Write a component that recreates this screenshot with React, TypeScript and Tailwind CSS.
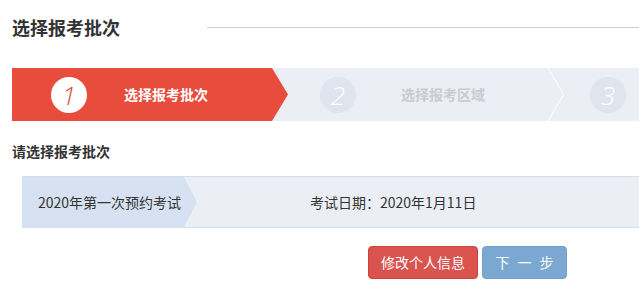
const font = { fontFamily: '"Noto Sans CJK SC", "Noto Sans", sans-serif' };

const StepCircle = ({ n, active }: { n: number; active?: boolean }) => (
  <div
    className={
      active
        ? "flex h-[36px] w-[36px] shrink-0 items-center justify-center rounded-full bg-white text-[#e84c3d]"
        : "flex h-[36px] w-[36px] shrink-0 items-center justify-center rounded-full bg-[#dfe5ee] text-white"
    }
  >
    <span className="font-['Open_Sans',sans-serif] text-[26px] font-light italic leading-none">{n}</span>
  </div>
);

export default function App() {
  return (
    <div className="min-h-[308px] w-[639px] overflow-hidden bg-white pl-[12px] pt-[15px] text-[#333]" style={font}>
      {/* header */}
      <div className="flex h-[24px] items-center">
        <h2 className="w-[195px] shrink-0 text-[18px] font-bold leading-[24px] text-[#333]">选择报考批次</h2>
        <div className="h-px flex-1 bg-[#cccccc]" />
      </div>

      {/* steps */}
      <div className="mt-[29px] flex h-[53px] items-center bg-[#ebeef4]">
        <div className="flex h-full w-[276px] shrink-0 items-center bg-[#e84c3d] [clip-path:polygon(0_0,260px_0,100%_50%,260px_100%,0_100%)]">
          <div className="ml-[39px]">
            <StepCircle n={1} active />
          </div>
          <span className="ml-[37px] text-[14px] font-bold text-white">选择报考批次</span>
        </div>
        <div className="flex h-full w-[260px] shrink-0 items-center">
          <div className="ml-[32px]">
            <StepCircle n={2} />
          </div>
          <span className="ml-[45px] text-[14px] font-bold text-[#c9ccd1]">选择报考区域</span>
        </div>
        <svg width="16" height="53" viewBox="0 0 16 53" className="shrink-0">
          <polyline points="0,0 15.5,26.5 0,53" fill="none" stroke="#ffffff" strokeWidth="1" />
        </svg>
        <div className="ml-[26px]">
          <StepCircle n={3} />
        </div>
      </div>

      {/* batch list */}
      <div className="mt-[20px] text-[14px] font-bold leading-[20px] text-[#333]">请选择报考批次</div>

      <div className="ml-[10px] mt-[15px] flex h-[52px] items-center border-y border-[#d3deef] bg-[#ebeef4]">
        <div className="flex h-full w-[175px] shrink-0 items-center bg-[#d6e2f1] pl-[16px] [clip-path:polygon(0_0,162px_0,100%_50%,162px_100%,0_100%)]">
          <span className="whitespace-nowrap text-[14px] text-[#333]">2020年第一次预约考试</span>
        </div>
        <span className="ml-[113px] whitespace-nowrap text-[14px] text-[#333]">考试日期：2020年1月11日</span>
      </div>

      {/* actions */}
      <div className="ml-[356px] mt-[18px] flex gap-[4px]">
        <button
          type="button"
          className="flex h-[33px] w-[110px] items-center justify-center rounded-[4px] border border-[#d43f3a] bg-[#d9534f] text-[14px] text-white"
        >
          修改个人信息
        </button>
        <button
          type="button"
          className="flex h-[33px] w-[85px] items-center justify-center rounded-[4px] border border-[#70a0cb] bg-[#7aa8d0] text-[14px] text-white"
        >
          <span className="tracking-[8px] [margin-right:-8px]">下一步</span>
        </button>
      </div>
    </div>
  );
}
